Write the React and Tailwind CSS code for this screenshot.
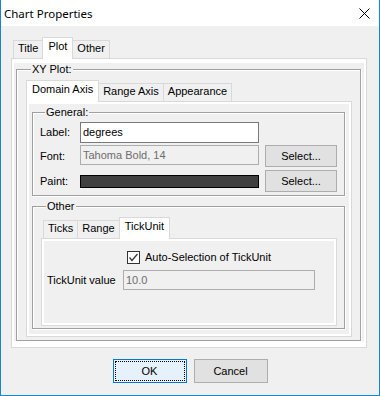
const ui = "font-['Liberation_Sans',Arial,sans-serif] text-[11px] leading-[13px] text-black"

function Tabs({ items, active }) {
  return (
    <div className="relative z-10 flex items-end pl-[2px]">
      {items.map((label, i) =>
        label === active ? (
          <div
            key={label}
            className={`relative z-10 -mb-px h-[22px] border border-b-0 border-[#d9d9d9] bg-white px-[5px] pt-[2px] ${i === 0 ? '-ml-[2px]' : '-ml-px'}`}
          >
            {label}
          </div>
        ) : (
          <div
            key={label}
            className={`h-[18px] border border-b-0 border-[#d9d9d9] bg-[#f0f0f0] px-[4px] pt-px ${i === 0 ? '' : '-ml-px'}`}
          >
            {label}
          </div>
        )
      )}
    </div>
  )
}

function TabPanel({ className = '', children }) {
  return (
    <div className={`border border-[#d9d9d9] bg-white p-[2px] ${className}`}>
      <div className="h-full bg-[#f0f0f0]">{children}</div>
    </div>
  )
}

function Group({ title, className = '', children }) {
  return (
    <fieldset
      className={`min-w-0 border border-[#a0a0a0] shadow-[inset_1px_1px_0_#fff,1px_1px_0_#fff] ${className}`}
    >
      <legend className="ml-[5px] bg-[#f0f0f0] px-px">{title}</legend>
      {children}
    </fieldset>
  )
}

function Button({ children, className = '' }) {
  return (
    <div
      className={`flex items-center justify-center border border-[#adadad] bg-[#e1e1e1] ${className}`}
    >
      {children}
    </div>
  )
}

export default function App() {
  return (
    <div className={`flex h-[396px] w-[380px] flex-col border-x border-b border-[#1883d7] bg-[#f0f0f0] ${ui}`}>
      {/* title bar */}
      <div className="flex h-[26px] shrink-0 items-center justify-between bg-white pl-[3px] pr-[9px]">
        <span className="font-['Noto_Sans',sans-serif] text-[11.5px]">Chart Properties</span>
        <svg width="11" height="11" viewBox="0 0 11 11" className="mt-px">
          <path d="M0.5 0.5 L10.5 10.5 M10.5 0.5 L0.5 10.5" stroke="#000" strokeWidth="1" />
        </svg>
      </div>

      <div className="ml-[10px] mr-[12px] pt-[11px]">
        <Tabs items={['Title', 'Plot', 'Other']} active="Plot" />
        <TabPanel>
          <Group title="XY Plot:" className="mb-[4px] ml-[2px] mr-[3px] mt-[2px] pb-[3px] pl-[9px] pr-[8px] pt-[4px]">
            <Tabs items={['Domain Axis', 'Range Axis', 'Appearance']} active="Domain Axis" />
            <TabPanel>
              <div className="flex flex-col pb-[5px] pt-[2px]">
                <Group title="General:" className="ml-[3px] mr-[4px] pb-[3px] pl-[7px] pt-[3px]">
                  <div className="grid grid-cols-[34px_179px_72px] items-center gap-x-[6px]">
                    <span>Label:</span>
                    <div className="flex h-[21px] items-center border border-[#7a7a7a] bg-white px-[2px]">degrees</div>
                    <span />

                    <span className="mt-[2px]">Font:</span>
                    <div className="mt-[2px] flex h-[20px] items-center self-start border border-[#adadad] bg-[#f0f0f0] px-[2px] text-[#6d6d6d]">
                      Tahoma Bold, 14
                    </div>
                    <Button className="mt-[2px] h-[22px]">Select...</Button>

                    <span className="mt-[3px]">Paint:</span>
                    <div className="mt-[3px] h-[13px] border border-black bg-[#404040]" />
                    <Button className="mt-[3px] h-[22px]">Select...</Button>
                  </div>
                </Group>

                <Group title="Other" className="ml-[3px] mr-[4px] mt-[4px] pb-[2px] pl-[8px] pr-[7px] pt-[4px]">
                  <Tabs items={['Ticks', 'Range', 'TickUnit']} active="TickUnit" />
                  <TabPanel className="h-[88px]">
                    <div className="grid grid-cols-[76px_192px] items-center gap-y-[4px] pl-[3px] pt-[8px]">
                      <span />
                      <label className="flex h-[17px] items-center gap-[5px] pl-[4px]">
                        <span className="flex h-[13px] w-[13px] items-center justify-center border border-[#333] bg-white">
                          <svg width="11" height="11" viewBox="0 0 11 11">
                            <path d="M1.5 5.5 L4 8.5 L9.5 2" fill="none" stroke="#333" strokeWidth="1.2" />
                          </svg>
                        </span>
                        <span>Auto-Selection of TickUnit</span>
                      </label>
                      <span>TickUnit value</span>
                      <div className="flex h-[20px] items-center border border-[#adadad] bg-[#f0f0f0] px-[2px] text-[#6d6d6d]">
                        10.0
                      </div>
                    </div>
                  </TabPanel>
                </Group>
              </div>
            </TabPanel>
          </Group>
        </TabPanel>
      </div>

      <div className="mt-[11px] flex justify-center gap-[7px]">
        <div className="h-[24px] w-[74px] border border-[#0078d7] bg-[#e5f1fb] p-px">
          <div className="flex h-full items-center justify-center border border-dotted border-black">OK</div>
        </div>
        <Button className="h-[24px] w-[74px]">Cancel</Button>
      </div>
    </div>
  )
}
